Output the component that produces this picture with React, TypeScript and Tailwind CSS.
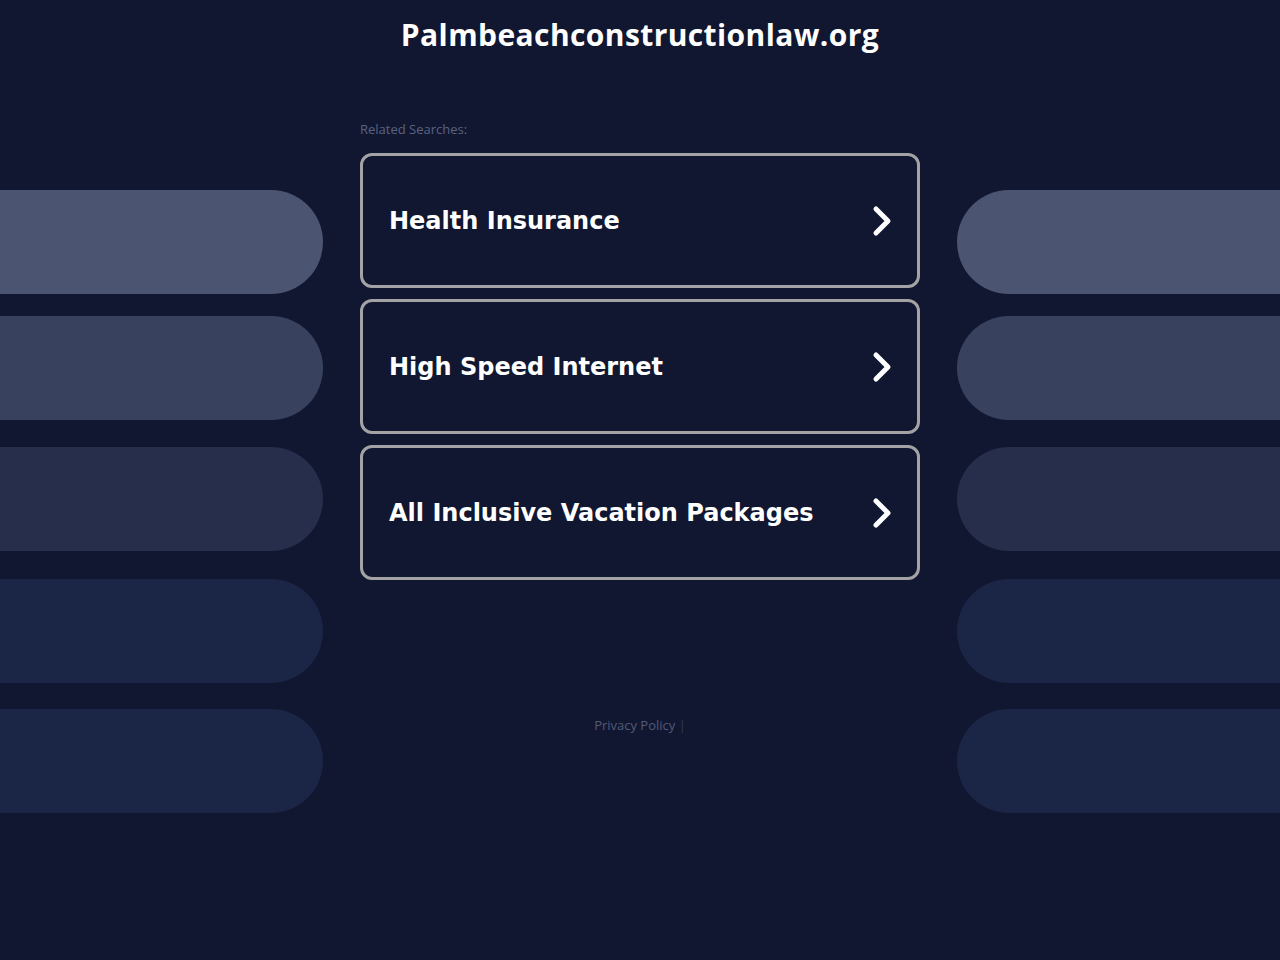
import React from "react";

const cards = ["Health Insurance", "High Speed Internet", "All Inclusive Vacation Packages"];

function Chevron() {
  return (
    <svg width="22" height="32" viewBox="0 0 22 32" className="shrink-0">
      <polyline points="5,4 17,16 5,28" fill="none" stroke="#ffffff" strokeWidth="5" strokeLinecap="round" strokeLinejoin="round" />
    </svg>
  );
}

function Pills({ side }: { side: "left" | "right" }) {
  const round = side === "left" ? "rounded-r-[52px]" : "rounded-l-[52px]";
  return (
    <div className="w-[323px] shrink-0 flex flex-col pt-[120px]">
      <div className={`h-[104px] bg-[#4b5571] ${round}`} />
      <div className={`h-[104px] mt-[22px] bg-[#38425f] ${round}`} />
      <div className={`h-[104px] mt-[27px] bg-[#262e4b] ${round}`} />
      <div className={`h-[104px] mt-[28px] bg-[#1b2546] ${round}`} />
      <div className={`h-[104px] mt-[26px] bg-[#1b2546] ${round}`} />
    </div>
  );
}

export default function App() {
  return (
    <div className="min-h-[960px] w-full bg-[#111730] overflow-hidden">
      <div className="h-[70px] flex justify-center items-center">
        <h1 className="text-white text-[30px] font-bold tracking-[0.4px] pb-[1px]" style={{ fontFamily: '"Open Sans", Inter, sans-serif' }}>
          Palmbeachconstructionlaw.org
        </h1>
      </div>
      <div className="flex justify-between">
        <Pills side="left" />
        <div className="w-[560px] shrink-0 flex flex-col">
          <div className="pt-[50px] h-[83px] text-[13px] text-[#5a6282]" style={{ fontFamily: '"Open Sans", sans-serif' }}>
            Related Searches:
          </div>
          <div className="flex flex-col gap-[11px]">
            {cards.map((c) => (
              <div key={c} className="h-[135px] border-[3px] border-[#a3a3a6] rounded-[12px] flex items-center justify-between pl-[26px] pr-[24px]">
                <span className="text-white text-[24px] font-bold" style={{ fontFamily: '"DejaVu Sans", Verdana, sans-serif' }}>
                  {c}
                </span>
                <Chevron />
              </div>
            ))}
          </div>
          <div className="mt-[136px] text-center text-[13px] text-[#525a78]" style={{ fontFamily: '"Open Sans", sans-serif' }}>
            Privacy Policy <span className="text-[#333a55]">|</span>
          </div>
        </div>
        <Pills side="right" />
      </div>
    </div>
  );
}
